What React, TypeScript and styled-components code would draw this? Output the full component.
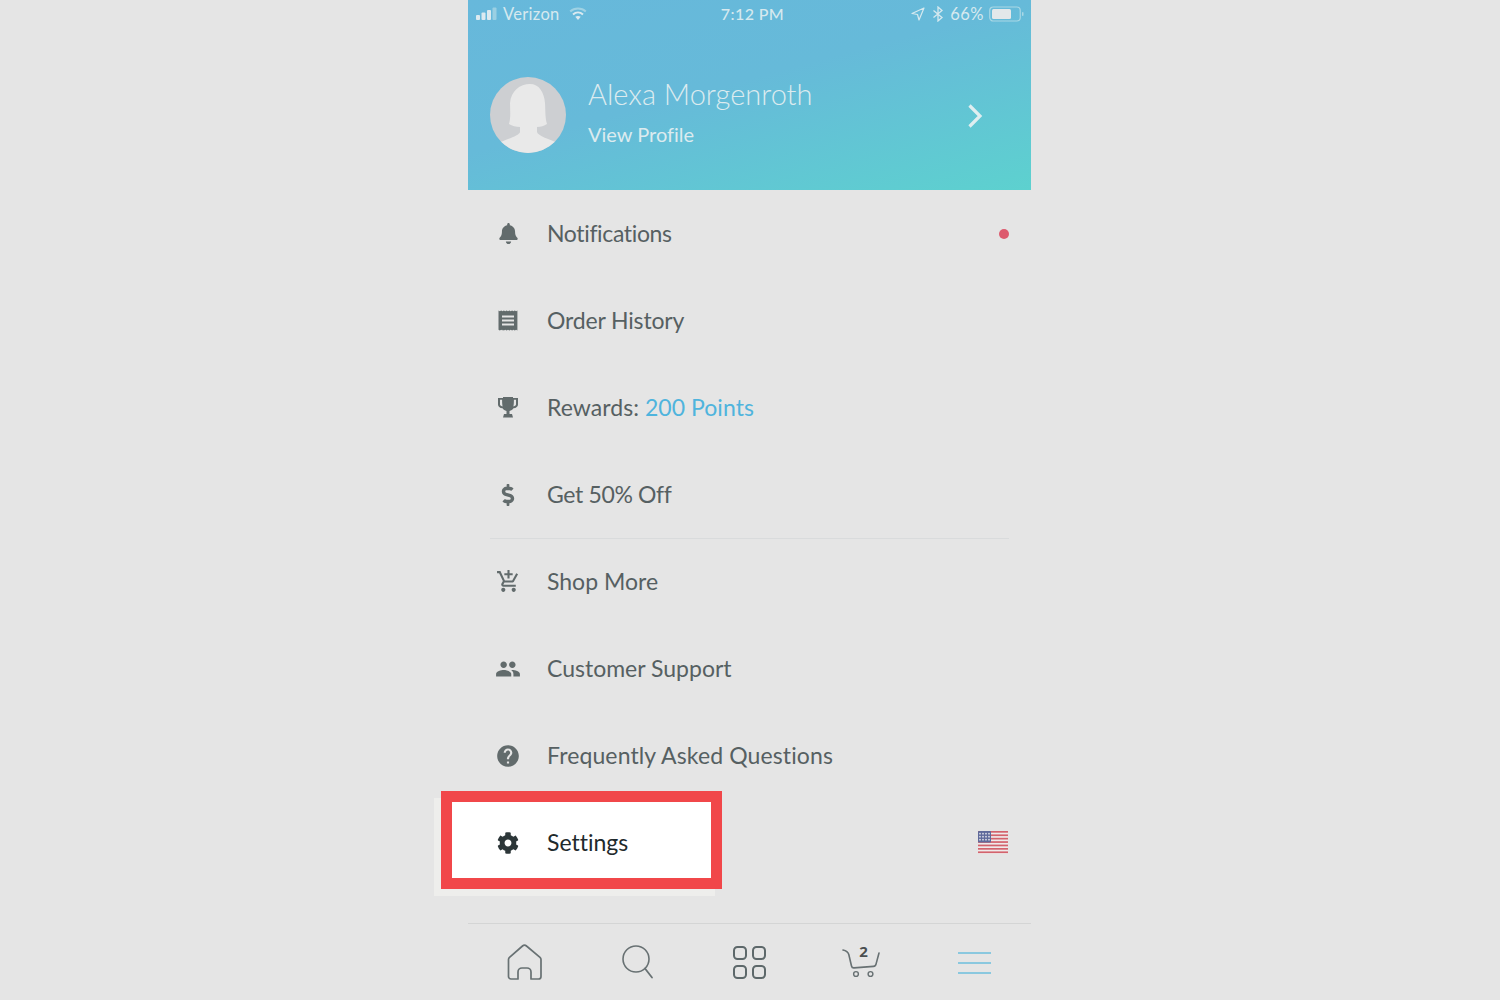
import styled, { createGlobalStyle } from "styled-components"
import { ReactNode } from "react"
import { FaBell, FaCog, FaDollarSign } from "react-icons/fa"
import { MdHelp, MdOutlineAddShoppingCart, MdPeople } from "react-icons/md"

const GlobalStyle = createGlobalStyle`
  html, body {
    margin: 0;
    padding: 0;
    background: #e5e5e5;
  }
  body {
    font-family: "Lato", "Liberation Sans", sans-serif;
    font-variant-ligatures: none;
  }
`

const Phone = styled.div`
  width: 563px;
  height: 1000px;
  margin: 0 auto;
  position: relative;
  left: -0.5px;
  display: flex;
  flex-direction: column;
`

const Header = styled.header`
  height: 190px;
  background: linear-gradient(165deg, #67b8db 0%, #66bad9 45%, #5dd1cf 100%);
  color: #dcebef;
  display: flex;
  flex-direction: column;
`

const StatusBar = styled.div`
  height: 28px;
  padding: 0 7px 0 8px;
  box-sizing: border-box;
  display: grid;
  grid-template-columns: 1fr auto 1fr;
  align-items: center;
  font-size: 16.5px;
  color: #d6e9ef;
`

const StatusLeft = styled.div`
  display: flex;
  align-items: center;
`

const Carrier = styled.span`
  margin: 0 9px 0 6px;
  letter-spacing: 0.3px;
`

const Clock = styled.span`
  font-size: 16px;
  font-weight: 500;
  letter-spacing: 0.4px;
  margin: 0 0 2px 5px;
`

const StatusRight = styled.div`
  display: flex;
  align-items: center;
  justify-content: flex-end;
`

const Percent = styled.span`
  margin: 0 5px 0 6px;
  letter-spacing: 0.5px;
`

const Profile = styled.div`
  flex: 1;
  display: flex;
  align-items: center;
  padding: 12px 48px 0 22px;
`

const Avatar = styled.svg`
  width: 76px;
  height: 76px;
  flex: none;
  margin-right: 22px;
`

const ProfileText = styled.div`
  flex: 1;
  display: flex;
  flex-direction: column;
  gap: 10px;
  padding-bottom: 9px;
`

const Name = styled.div`
  font-size: 29px;
  line-height: 36px;
  font-weight: 300;
`

const ViewProfile = styled.div`
  font-size: 20px;
  line-height: 24px;
`

const Menu = styled.nav`
  height: 733px;
  display: flex;
  flex-direction: column;
`

const Row = styled.div<{ $highlight?: boolean; $rule?: boolean }>`
  height: 87px;
  flex: none;
  box-sizing: border-box;
  padding: 0 22px;
  display: flex;
  align-items: center;
  font-size: 23px;
  color: ${p => (p.$highlight ? "#1f2a2c" : "#566062")};
  position: relative;

  ${p =>
    p.$rule &&
    `
    &::after {
      content: "";
      position: absolute;
      left: 22px;
      right: 22px;
      bottom: -1px;
      height: 1px;
      background: #d9dbdc;
    }
  `}

  ${p =>
    p.$highlight &&
    `
    &::before {
      content: "";
      position: absolute;
      left: -27px;
      top: -8px;
      width: 281px;
      height: 98px;
      box-sizing: border-box;
      background: #ffffff;
      border: 11px solid #f1474a;
      box-shadow: -7px 7px 0 #eeeeec;
    }
  `}
`

const IconCell = styled.span<{ $dark?: boolean }>`
  width: 36px;
  height: 36px;
  margin-right: 21px;
  flex: none;
  display: flex;
  align-items: center;
  justify-content: center;
  color: ${p => (p.$dark ? "#2c3638" : "#626b6c")};
  position: relative;
`

const Label = styled.span<{ $tracking?: number }>`
  flex: 1;
  position: relative;
  padding-bottom: 2px;
  letter-spacing: ${p => p.$tracking ?? 0}px;
`

const Points = styled.span`
  color: #4fb4dd;
`

const Dot = styled.span`
  width: 10px;
  height: 10px;
  border-radius: 50%;
  background: #dd5a6e;
`

const Flag = styled.svg`
  width: 30px;
  height: 23px;
  margin-right: 1px;
`

const TabBar = styled.footer`
  height: 77px;
  box-sizing: border-box;
  border-top: 1px solid #d4d5d5;
  padding-top: 1px;
  display: grid;
  grid-template-columns: repeat(5, 1fr);
  align-items: center;
`

const Tab = styled.div`
  display: flex;
  justify-content: center;
  align-items: center;
  color: #687173;
  position: relative;
`

const CartCount = styled.span`
  position: absolute;
  left: 3px;
  right: 0;
  top: -4px;
  text-align: center;
  font-family: "Open Sans", sans-serif;
  font-size: 15px;
  line-height: 18px;
  font-weight: 700;
  color: #4a4f50;
`

function Receipt() {
  return (
    <svg width="21" height="21" viewBox="0.5 0 21 21">
      <path
        fill="currentColor"
        fillRule="evenodd"
        d="M1 .5l1.300.7L3.700.5l1.300.7L6.400.5l1.300.7L9.100.5l1.400.7 1.400-.7 1.300.7 1.400-.7 1.300.7 1.400-.7 1.300.7 1.300-.7v20l-1.300-.7-1.300.7-1.400-.7-1.300.7-1.400-.7-1.300.7-1.400-.7-1.400.7-1.400-.7-1.300.7-1.400-.7L5 20.500l-1.300-.7-1.400.7-1.300-.7zM4.500 5.500v2h12v-2zm0 4v2h12v-2zm0 4v2h12v-2z"
      />
    </svg>
  )
}

function Trophy() {
  return (
    <svg width="22" height="22" viewBox="0 0 22 22">
      <path
        fill="currentColor"
        fillRule="evenodd"
        d="M1 1h5V0h10v1h5v6.500c0 2-1.800 3.600-4.500 3.800-1 1.300-2.200 2.200-4 2.600V17h2.500l1 3.500h-10l1-3.500h2.500v-3.100c-1.800-.4-3-1.300-4-2.600C2.800 11.100 1 9.500 1 7.500zM3 2.800v4.500c0 .9.700 1.700 2.600 2.200-.3-1.500-.5-3-.5-6.700zm16 0h-2.100c0 3.700-.2 5.200-.5 6.700C18.300 9 19 8.200 19 7.300z"
      />
    </svg>
  )
}

function Chevron() {
  return (
    <svg width="16" height="26" viewBox="0 0 16 26" style={{ flex: "none", marginTop: 2 }}>
      <path d="M2.500 2.500 13 13 2.500 23.500" fill="none" stroke="#dfeef0" strokeWidth="3.200" />
    </svg>
  )
}

function SignalBars() {
  return (
    <svg width="21" height="14" viewBox="0 0 21 14">
      <rect x="0" y="8" width="4" height="5" rx="1" fill="#dceaf0" />
      <rect x="5.500" y="5.500" width="4" height="7.500" rx="1" fill="#dceaf0" />
      <rect x="11" y="3" width="4" height="10" rx="1" fill="#dceaf0" />
      <rect x="16.500" y="0.500" width="4" height="12.500" rx="1" fill="#9bd0e3" />
    </svg>
  )
}

function Wifi() {
  return (
    <svg width="18" height="14" viewBox="0 0 18 14">
      <path d="M1.200 4.500C5.500.600 12.500.600 16.800 4.500" fill="none" stroke="#9fd2e4" strokeWidth="2" />
      <path d="M4 7.500c3-2.600 7-2.600 10 0" fill="none" stroke="#dceaf0" strokeWidth="2" />
      <path d="M6.300 9.800c1.600-1.200 3.800-1.200 5.400 0L9 13z" fill="#dceaf0" />
    </svg>
  )
}

function Battery() {
  return (
    <svg width="35" height="16" viewBox="0 0 35 16">
      <rect x="0.750" y="1" width="30.500" height="14" rx="3.500" fill="none" stroke="#a9d8e5" strokeWidth="1.200" />
      <rect x="3" y="3" width="19" height="10" rx="1.500" fill="#e3e8ea" />
      <rect x="33" y="6" width="1.500" height="4" rx="0.700" fill="#a9d8e5" />
    </svg>
  )
}

function UsFlag() {
  const stripes = [0, 1, 2, 3, 4, 5, 6]
  return (
    <Flag viewBox="0 0 30 23">
      <rect width="30" height="23" rx="2" fill="#efeaea" />
      {stripes.map(i => (
        <rect key={i} y={i * 3.4} width="30" height="1.700" fill="#d3636d" />
      ))}
      <rect width="13" height="11.500" rx="1" fill="#5f6a9b" />
      {[2, 5, 8].map(y =>
        [2, 5, 8, 11].map(x => <circle key={`${x}-${y}`} cx={x} cy={y + 0.7} r="0.900" fill="#dcdde6" />)
      )}
    </Flag>
  )
}

type MenuItem = {
  icon: ReactNode
  label: ReactNode
  tracking?: number
  rule?: boolean
  trailing?: ReactNode
}

const items: MenuItem[] = [
  { icon: <FaBell size={21} />, label: "Notifications", tracking: -0.35, trailing: <Dot /> },
  { icon: <Receipt />, label: "Order History", tracking: -0.15 },
  { icon: <Trophy />, label: <>Rewards: <Points>200 Points</Points></>, tracking: 0.05 },
  { icon: <FaDollarSign size={22} />, label: "Get 50% Off", tracking: -0.35, rule: true },
  { icon: <MdOutlineAddShoppingCart size={25} />, label: "Shop More" },
  { icon: <MdPeople size={26} />, label: "Customer Support" },
  { icon: <MdHelp size={26} />, label: "Frequently Asked Questions", tracking: 0.12 },
]

export default function App() {
  return (
    <>
      <GlobalStyle />
      <Phone>
        <Header>
          <StatusBar>
            <StatusLeft>
              <SignalBars />
              <Carrier>Verizon</Carrier>
              <Wifi />
            </StatusLeft>
            <Clock>7:12 PM</Clock>
            <StatusRight>
              <svg width="14" height="14" viewBox="0 0 14 14">
                <path d="M13 1 1 6.500l5.500 1L8 13z" fill="none" stroke="#d6e9ef" strokeWidth="1.200" strokeLinejoin="round" />
              </svg>
              <svg width="12" height="16" viewBox="0 0 12 16" style={{ marginLeft: 7 }}>
                <path d="M1.500 4.500 10 11.500 6 15V1l4 3.500L1.500 11.500" fill="none" stroke="#d6e9ef" strokeWidth="1.300" />
              </svg>
              <Percent>66%</Percent>
              <Battery />
            </StatusRight>
          </StatusBar>
          <Profile>
            <Avatar viewBox="0 0 76 76">
              <defs>
                <clipPath id="avatar-clip">
                  <circle cx="38" cy="38" r="38" />
                </clipPath>
              </defs>
              <circle cx="38" cy="38" r="38" fill="#cdcfd2" />
              <path
                clipPath="url(#avatar-clip)"
                fill="#e9e9e9"
                d="M40 7c9 0 14 8 15 19 .5 8 0 14 2 21-3 2-6 3-10 3v5c1 4 12 7 23 12v9H6v-9c11-5 23-8 24-12v-5c-4 0-8-1-11-3 2-7 1-14 1-21C21 14 30 7 40 7z"
              />
            </Avatar>
            <ProfileText>
              <Name>Alexa Morgenroth</Name>
              <ViewProfile>View Profile</ViewProfile>
            </ProfileText>
            <Chevron />
          </Profile>
        </Header>
        <Menu>
          {items.map((item, i) => (
            <Row key={i} $rule={item.rule}>
              <IconCell>{item.icon}</IconCell>
              <Label $tracking={item.tracking}>{item.label}</Label>
              {item.trailing}
            </Row>
          ))}
          <Row $highlight>
            <IconCell $dark>
              <FaCog size={22} />
            </IconCell>
            <Label>Settings</Label>
            <UsFlag />
          </Row>
        </Menu>
        <TabBar>
          <Tab>
            <svg width="36" height="38" viewBox="-1 0 36 38">
              <path
                d="M11 35H4a2.500 2.500 0 0 1-2.500-2.500v-17a3 3 0 0 1 1-2.200L15.500 2a3 3 0 0 1 4 0L33 13.300a3 3 0 0 1 1 2.200v17a2.500 2.500 0 0 1-2.500 2.500H24v-7a4 4 0 0 0-4-4h-5a4 4 0 0 0-4 4z"
                fill="none"
                stroke="currentColor"
                strokeWidth="1.700"
                strokeLinejoin="round"
              />
            </svg>
          </Tab>
          <Tab>
            <svg width="34" height="36" viewBox="-2 0 34 36">
              <circle cx="14" cy="14" r="13" fill="none" stroke="currentColor" strokeWidth="1.600" />
              <path d="M23 23.500 30 32.500" fill="none" stroke="currentColor" strokeWidth="1.800" strokeLinecap="round" />
            </svg>
          </Tab>
          <Tab>
            <svg width="33" height="33" viewBox="0 0 33 33">
              <g fill="none" stroke="#5d686a" strokeWidth="2">
                <rect x="1" y="1" width="12" height="12" rx="3.500" />
                <rect x="20" y="1" width="12" height="12" rx="3.500" />
                <rect x="1" y="20" width="12" height="12" rx="3.500" />
                <rect x="20" y="20" width="12" height="12" rx="3.500" />
              </g>
            </svg>
          </Tab>
          <Tab>
            <svg width="40" height="34" viewBox="0 0 40 34">
              <path
                d="M1 4c3 .7 5 2 5.800 4.500L9.500 20c.3 1.500 1 2 2.500 1.900l19.500-1.500c1.500-.1 2.300-.8 2.600-2.500L37 7"
                fill="none"
                stroke="currentColor"
                strokeWidth="1.600"
                strokeLinecap="round"
              />
              <circle cx="14" cy="28" r="2.400" fill="none" stroke="currentColor" strokeWidth="1.400" />
              <circle cx="28.500" cy="28" r="2.400" fill="none" stroke="currentColor" strokeWidth="1.400" />
            </svg>
            <CartCount>2</CartCount>
          </Tab>
          <Tab>
            <svg width="33" height="22" viewBox="0 0 33 22">
              <path d="M0 1h33M0 11h33M0 21h33" stroke="#6cbfdd" strokeWidth="1.700" />
            </svg>
          </Tab>
        </TabBar>
      </Phone>
    </>
  )
}
